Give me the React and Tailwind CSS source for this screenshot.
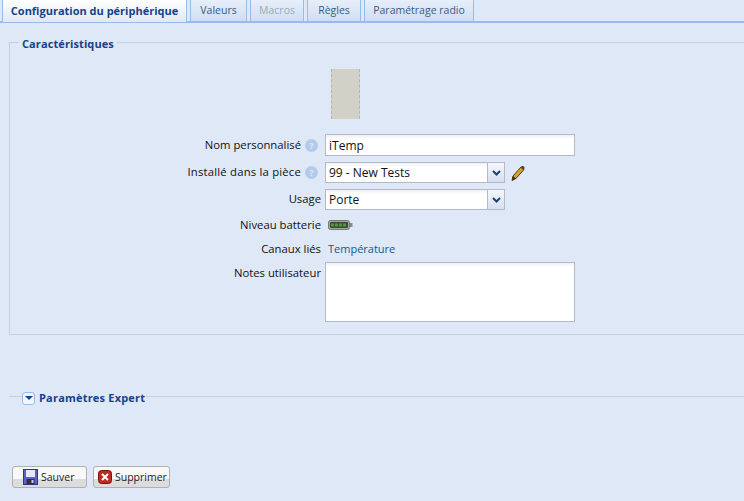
import React from "react";

const tabs = [
  { label: "Valeurs", width: "w-[57px]", color: "text-[#3b5a82]" },
  { label: "Macros", width: "w-[54px]", color: "text-[#a0a8b4]" },
  { label: "Règles", width: "w-[54px]", color: "text-[#3b5a82]" },
  { label: "Paramétrage radio", width: "w-[110px]", color: "text-[#3b5a82]" },
];

const HelpIcon = () => (
  <span className="flex h-[13px] w-[13px] shrink-0 items-center justify-center rounded-full bg-[#b3cbea] text-[9px] font-bold leading-none text-[#dfe8f6]">
    ?
  </span>
);

const Pencil = () => (
  <svg width="16" height="18" viewBox="0 0 16 18">
    <path d="M2 16.500l1-4.500 8-9 3 2.500-8 9z" fill="#d9a02a" stroke="#4d3a12" strokeWidth="1" />
    <path d="M10.500 3.500l1-1.200c.7-.6 1.500-.5 2 0l.8.800c.4.500.4 1.200-.1 1.800l-1 1.100z" fill="#4a4a3a" />
    <path d="M2 16.500l1-4.500 3 2.500z" fill="#3a3020" />
  </svg>
);

const Battery = () => (
  <svg width="25" height="10" viewBox="0 0 25 10">
    <rect x="0.500" y="0.500" width="21" height="9" rx="2" fill="#a5a8a0" stroke="#767872" />
    <rect x="2" y="2" width="18" height="6" rx="1" fill="#3a4a36" />
    <rect x="3" y="3.500" width="3" height="3" fill="#4c9a45" />
    <rect x="7" y="3.500" width="3" height="3" fill="#4c9a45" />
    <rect x="11" y="3.500" width="3" height="3" fill="#4c9a45" />
    <rect x="15" y="3.500" width="3" height="3" fill="#4c9a45" />
    <rect x="22" y="3" width="2.500" height="4" fill="#8a8a8a" />
  </svg>
);

const FloppyIcon = () => (
  <svg width="15" height="16" viewBox="0 0 15 16" className="shrink-0">
    <rect x="0.500" y="0.500" width="14" height="15" fill="#5a63c0" stroke="#2f3580" />
    <rect x="3" y="1" width="9" height="7" fill="#e6e8f6" />
    <rect x="3.500" y="10" width="8" height="5" fill="#30303a" />
    <rect x="8.500" y="11" width="2" height="3" fill="#cfd2e6" />
  </svg>
);

const DeleteIcon = () => (
  <svg width="14" height="14" viewBox="0 0 14 14" className="shrink-0">
    <rect x="0.500" y="0.500" width="13" height="13" rx="3" fill="#bd2a22" stroke="#7a1410" />
    <path d="M4 4l6 6M10 4l-6 6" stroke="#fff" strokeWidth="2" />
  </svg>
);

const Row = ({ label, help, className, labelClass = "", children }) => (
  <div className={`flex ${className}`}>
    <div className={`flex w-[311px] shrink-0 items-center justify-end gap-1 text-[11.3px] ${help ? "pr-[3px]" : ""}`}>
      <span className={labelClass}>{label}</span>
      {help && <HelpIcon />}
    </div>
    <div className="ml-1 flex items-center">{children}</div>
  </div>
);

const fieldClass =
  "border border-[#b5b8c8] bg-gradient-to-b from-[#f0f0f0] to-white to-[4px]";

const Select = ({ value }) => (
  <div className={`flex h-[21px] w-[180px] ${fieldClass}`}>
    <span className="flex-1 px-[3px] leading-[19px]">{value}</span>
    <span className="flex w-[17px] items-center justify-center border-l border-[#b5b8c8] bg-gradient-to-b from-[#f4f7fc] to-[#d6e0f0]">
      <svg width="9" height="6" viewBox="0 0 9 6">
        <path d="M1 1l3.500 3.500L8 1" fill="none" stroke="#1f3f78" strokeWidth="2" />
      </svg>
    </span>
  </div>
);

const Button = ({ icon, label, width, padding }) => (
  <button className={`flex h-[22px] ${width} ${padding} items-center gap-[3px] rounded-[3px] border border-[#b0b0b0] bg-gradient-to-b from-[#f8f8f8] from-60% to-[#dcdcdc] to-60% text-[10.5px] text-[#222]`}>
    {icon}
    <span className="pt-px">{label}</span>
  </button>
);

export default function App() {
  return (
    <div className="flex h-[501px] w-[744px] flex-col overflow-hidden bg-[#dfe8f6] font-['Open_Sans',sans-serif] text-[12px] text-[#111]">
      {/* Tabs */}
      <div className="flex h-[23px] shrink-0 gap-[3px] border-b-[2px] border-[#99bbe8] pl-[2px]">
        <div className="h-[22px] w-[185px] whitespace-nowrap border-x border-[#99bbe8] bg-gradient-to-b from-white to-[#dfe8f6] text-center text-[11px] font-bold leading-[21px] text-[#15428b]">
          Configuration du périphérique
        </div>
        {tabs.map((tab) => (
          <div
            key={tab.label}
            className={`h-[21px] ${tab.width} whitespace-nowrap border-x border-[#99bbe8] bg-gradient-to-b from-[#e6effa] to-[#cfdef3] text-center text-[10.5px] leading-[21px] ${tab.color}`}
          >
            {tab.label}
          </div>
        ))}
      </div>

      {/* Caractéristiques */}
      <fieldset className="ml-[9px] mt-[10px] h-[302px] border border-r-0 border-[#c8cfdc]">
        <legend className="ml-[9px] px-[3px] pt-[4px] text-[11px] font-bold leading-[14px] tracking-[0.1px] text-[#15428b]">Caractéristiques</legend>
        <div className="ml-[321px] mt-[18px] h-[50px] w-[29px] border-x border-dashed border-[#b5b5aa] bg-[#d2d1c8]" />

        <div className="mt-[15px] flex flex-col">
          <Row label="Nom personnalisé" help className="h-[22px]">
            <input readOnly value="iTemp" className={`${fieldClass} h-full w-[250px] px-[3px] outline-none`} />
          </Row>
          <Row label="Installé dans la pièce" help labelClass="tracking-[0.2px]" className="mt-[6px] h-[21px]">
            <Select value="99 - New Tests" />
            <span className="ml-[5px]"><Pencil /></span>
          </Row>
          <Row label="Usage" className="mt-[6px] h-[21px]">
            <Select value="Porte" />
          </Row>
          <Row label="Niveau batterie" className="mt-[5px] h-[20px]">
            <span className="ml-[3px]"><Battery /></span>
          </Row>
          <Row label="Canaux liés" className="mt-[4px] h-[20px]">
            <span className="ml-[3px] text-[11px] text-[#0b5c92]">Température</span>
          </Row>
          <div className="mt-[3px] flex">
            <div className="w-[311px] shrink-0 text-right text-[11.3px] leading-[22px]">Notes utilisateur</div>
            <div className={`${fieldClass} ml-1 h-[60px] w-[250px]`} />
          </div>
        </div>
      </fieldset>

      {/* Paramètres Expert */}
      <div className="ml-[9px] mt-[56px] flex h-[14px] items-center">
        <div className="mb-[4px] h-px w-[13px] bg-[#c8cfdc]" />
        <span className="flex h-[13px] w-[13px] items-center justify-center rounded-[3px] border border-[#99bbe8] bg-[#f2f6fc]">
          <span className="h-0 w-0 border-x-[4px] border-t-[4px] border-x-transparent border-t-[#15428b]" />
        </span>
        <span className="ml-[4px] mr-[1px] text-[11px] font-bold tracking-[0.2px] text-[#15428b]">Paramètres Expert</span>
        <div className="mb-[4px] h-px flex-1 bg-[#c8cfdc]" />
      </div>

      {/* Actions */}
      <div className="ml-[12px] mt-[61px] flex gap-[6px]">
        <Button icon={<FloppyIcon />} label="Sauver" width="w-[75px]" padding="pl-[10px]" />
        <Button icon={<DeleteIcon />} label="Supprimer" width="w-[77px]" padding="pl-[4px]" />
      </div>
    </div>
  );
}
